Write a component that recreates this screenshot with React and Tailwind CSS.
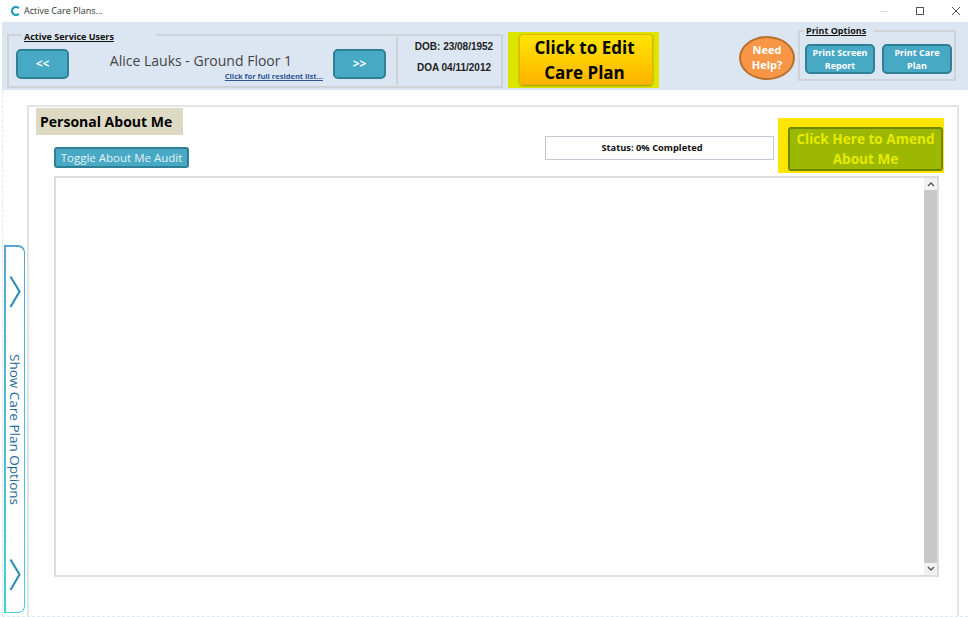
import React from 'react';

const tealBtn = "flex items-center justify-center bg-[#48a9c5] border-2 border-[#2f7f96] rounded-[5px] text-white font-bold text-center";

const Chevron = () => (
  <svg width="12" height="34" viewBox="0 0 12 34" fill="none" className="shrink-0">
    <path d="M1.5 1.5 L10.5 16.5 L1.5 32" stroke="#2c8fb0" strokeWidth="2.1" />
  </svg>
);

const TitleBar = () => (
  <div className="h-[22px] flex items-center bg-white pl-[11px] pr-[7px] text-[#333]">
    <svg width="9" height="10" viewBox="0 0 9 10" fill="none">
      <path d="M7.8 2.2 A4 4 0 1 0 7.8 7.8" stroke="#1f9fb3" strokeWidth="2.2" />
    </svg>
    <span className="ml-[4px] text-[9px]">Active Care Plans...</span>
    <div className="ml-auto flex items-center gap-[26px]">
      <svg width="10" height="10" viewBox="0 0 10 10" fill="none">
        <path d="M1 5.5 H9" stroke="#dcdcdc" />
      </svg>
      <svg width="10" height="10" viewBox="0 0 10 10" fill="none">
        <rect x="1.5" y="1.5" width="7" height="7" stroke="#555" />
      </svg>
      <svg width="10" height="10" viewBox="0 0 10 10" fill="none">
        <path d="M1 1 L9 9 M9 1 L1 9" stroke="#555" />
      </svg>
    </div>
  </div>
);

const Header = () => (
  <div className="h-[68px] ml-[2px] bg-[#dce6f2] flex items-start">
    <fieldset className="ml-[5px] mt-[5px] w-[496px] h-[61px] border-2 border-[#cfd3d8]">
      <legend className="ml-[13px] pl-[2px] pr-[42px] pt-[4px] text-[9px] leading-[12px] font-bold underline text-[#111]">Active Service Users</legend>
      <div className="flex items-start w-full">
        <button className={tealBtn + " ml-[7px] mt-[6px] w-[53px] h-[30px] text-[12px]"}>&lt;&lt;</button>
        <div className="mt-[8px] w-[264px] flex flex-col">
          <span className="text-[14px] leading-[20px] text-[#444] text-center">Alice Lauks - Ground Floor 1</span>
          <a className="text-right pr-[10px] text-[7.5px] leading-[10px] font-bold underline text-[#2f5597]">Click for full resident list...</a>
        </div>
        <button className={tealBtn + " mt-[6px] w-[53px] h-[30px] text-[12px]"}>&gt;&gt;</button>
        <div className="ml-[10px] -mt-[6px] h-[48px] w-[105px] border-l-2 border-[#cfd3d8] flex flex-col items-center gap-[9px] pt-[4px] pl-[9px] font-['Liberation_Sans',sans-serif] text-[10px] leading-[12px] font-bold text-[#222]">
          <span>DOB: 23/08/1952</span>
          <span>DOA 04/11/2012</span>
        </div>
      </div>
    </fieldset>
    <div className="ml-[5px] mt-[10px] w-[151px] h-[56px] bg-[#dde600] pl-[11px] pr-[6px] pt-[2px] pb-[3px]">
      <button className="w-full h-full pr-[3px] rounded-[4px] border border-[#e0b400] shadow-[0_1px_2px_rgba(120,90,0,0.6)] bg-gradient-to-b from-[#ffe600] to-[#ffb300] text-[17px] leading-[25px] font-bold text-black">
        Click to Edit<br />Care Plan
      </button>
    </div>
    <button className="ml-[80px] mt-[14px] w-[56px] h-[44px] pb-[2px] rounded-[50%] bg-[#f79646] border-2 border-[#b8702f] text-white font-bold text-[11px] leading-[15px]">
      Need<br />Help?
    </button>
    <fieldset className="ml-[3px] mt-[3px] w-[158px] h-[56px] border-2 border-[#cfd3d8]">
      <legend className="ml-[4px] pl-[2px] pr-[8px] text-[9px] leading-[12px] font-bold underline text-[#111]">Print Options</legend>
      <div className="flex gap-[7px] pl-[5px] pt-[7px]">
        <button className={tealBtn + " w-[70px] h-[30px] text-[9px] leading-[13px]"}>Print Screen<br />Report</button>
        <button className={tealBtn + " w-[70px] h-[30px] text-[9px] leading-[13px]"}>Print Care<br />Plan</button>
      </div>
    </fieldset>
  </div>
);

const SideTab = () => (
  <div className="ml-[1px] mt-[155px] w-[21px] h-[368px] p-[1.5px] rounded-tr-[7px] rounded-br-[7px] bg-gradient-to-b from-[#55a5d2] to-[#3fd2d2]">
    <div className="w-full h-full bg-white rounded-tr-[6px] rounded-br-[6px] flex flex-col items-center pt-[28px] pb-[20px]">
      <Chevron />
      <span className="mt-[45px] [writing-mode:vertical-rl] text-[13.5px] leading-[14px] text-[#1f6a9a] whitespace-nowrap">Show Care Plan Options</span>
      <div className="mt-auto"><Chevron /></div>
    </div>
  </div>
);

const Scrollbar = () => (
  <div className="ml-auto w-[13px] h-full flex flex-col bg-[#f1f1f1] text-[#555]">
    <div className="h-[12px] flex items-center justify-center">
      <svg width="8" height="6" viewBox="0 0 8 6" fill="none"><path d="M1 5 L4 2 L7 5" stroke="#555" strokeWidth="1.4" /></svg>
    </div>
    <div className="flex-1 bg-[#c8c8c8]"></div>
    <div className="h-[12px] flex items-center justify-center">
      <svg width="8" height="6" viewBox="0 0 8 6" fill="none"><path d="M1 1 L4 4 L7 1" stroke="#555" strokeWidth="1.4" /></svg>
    </div>
  </div>
);

const MainPanel = () => (
  <div className="ml-[2px] mt-[15px] w-[932px] h-[511px] border-2 border-b-0 border-[#e4e4e4]">
    <div className="flex items-start h-[69px]">
      <div className="w-[516px] pl-[7px] pt-[1px] flex flex-col items-start">
        <div className="w-[147px] h-[27px] bg-[#ddd9c3] pl-[4px] flex items-center text-[14px] font-bold text-black">Personal About Me</div>
        <button className="ml-[18px] mt-[12px] w-[135px] h-[21px] bg-[#48a9c5] border-2 border-[#2f7f96] rounded-[3px] text-[#e4f1f5] text-[11.5px]">Toggle About Me Audit</button>
      </div>
      <div className="mt-[29px] w-[229px] h-[24px] bg-white border border-[#c3cad6] flex items-center justify-center pr-[15px] text-[9.3px] font-bold text-[#111]">Status: 0% Completed</div>
      <div className="ml-[4px] mt-[11px] w-[166px] h-[55px] bg-[#ffe600] pl-[10px] pr-[1px] pt-[9px] pb-[2px]">
        <button className="w-full h-full rounded-[3px] bg-[#9db800] border-2 border-[#6f8600] text-[#e6ea00] text-[13.6px] leading-[20px] font-bold">
          Click Here to Amend<br />About Me
        </button>
      </div>
    </div>
    <div className="ml-[25px] w-[885px] h-[401px] border-2 border-[#dcdcdc] bg-white">
      <Scrollbar />
    </div>
  </div>
);

export default function App() {
  return (
    <div className="w-[968px] h-[617px] overflow-hidden bg-white font-['Open_Sans',sans-serif]">
      <TitleBar />
      <Header />
      <div className="h-[527px] ml-[2px] border-l border-b border-dashed border-[#dfe9f3] flex">
        <SideTab />
        <MainPanel />
      </div>
    </div>
  );
}
